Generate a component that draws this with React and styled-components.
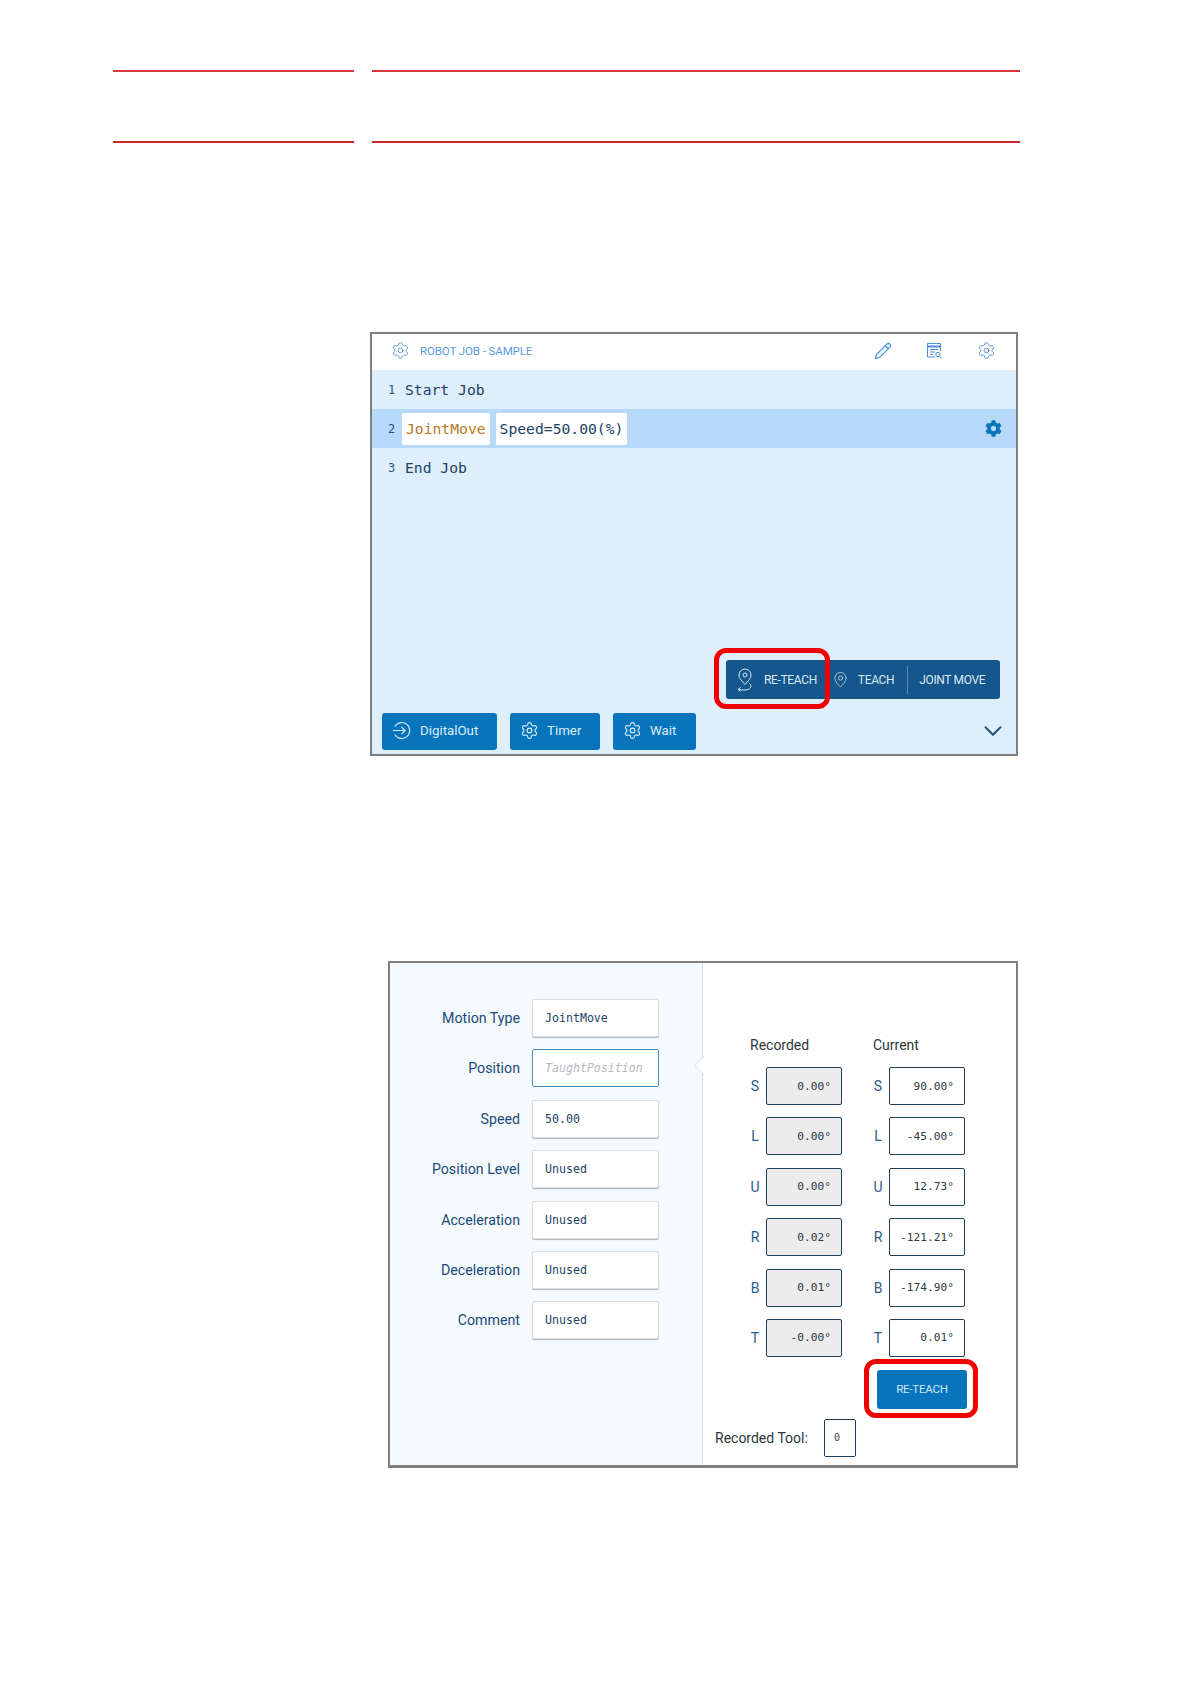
import React from 'react'
import styled, { createGlobalStyle } from 'styled-components'
import { Settings, Pencil, MapPin, ChevronDown } from 'lucide-react'
import { FaCog } from 'react-icons/fa'

const GlobalStyle = createGlobalStyle`
  html, body {
    margin: 0;
    padding: 0;
    background: #fff;
  }
  * {
    box-sizing: border-box;
  }
`

const mono = `"DejaVu Sans Mono", "Liberation Mono", monospace`
const sans = `Roboto, "Liberation Sans", sans-serif`

const Page = styled.div`
  width: 1191px;
  height: 1684px;
  padding: 70px 0 0 113px;
  overflow: hidden;
  font-family: ${sans};
`

const Rules = styled.div`
  display: grid;
  grid-template-columns: 241px 648px;
  column-gap: 18px;
  height: 73px;
`

const RuleCell = styled.div`
  border-top: 2px solid #d8353d;
  border-bottom: 2px solid #c9262e;
`

const JobPanel = styled.section`
  width: 648px;
  height: 424px;
  margin: 189px 0 0 257px;
  border: 2px solid #7f7f7f;
  display: flex;
  flex-direction: column;
  background: #deeefb;
`

const JobHeader = styled.header`
  height: 36px;
  flex: none;
  display: flex;
  align-items: center;
  padding: 0 20px 3px 19px;
  background: #fff;
  color: #4a8fd8;
`

const JobTitle = styled.span`
  margin-left: 10px;
  font-size: 11.5px;
  letter-spacing: -0.1px;
  flex: 1;
  color: #5b9ade;
`

const HeaderTools = styled.div`
  display: flex;
  align-items: center;
  gap: 34px;
`

const JobRow = styled.div`
  height: 39px;
  flex: none;
  display: flex;
  align-items: center;
  padding: 0 14px 0 16px;
  background: ${(p) => (p.$active ? '#b8dafa' : 'transparent')};
  font-family: ${mono};
  font-size: 14.7px;
  color: #1c4265;
`

const LineNo = styled.span`
  width: ${(p) => (p.$chips ? '14px' : '17px')};
  font-size: 12px;
  color: #23557f;
`

const Chip = styled.span`
  height: 32px;
  display: flex;
  align-items: center;
  padding: 0 4px;
  margin-right: 6px;
  border-radius: 2px;
  background: #fff;
  color: ${(p) => p.$accent || '#1c4265'};
`

const RowGear = styled(FaCog)`
  margin-left: auto;
  width: 17px;
  height: 17px;
  color: #0874bb;
`

const JobFooter = styled.div`
  margin-top: auto;
  padding: 0 4px 4px 10px;
  display: flex;
  flex-direction: column;
  gap: 14px;
`

const MotionRow = styled.div`
  display: flex;
  justify-content: flex-end;
  padding-right: 12px;
`

const MotionGroup = styled.div`
  position: relative;
  width: 274px;
  height: 39px;
  display: flex;
  align-items: center;
  border-radius: 3px;
  background: #15568c;
  color: #d5e6f4;
  font-size: 12px;
  letter-spacing: -0.35px;
`

const MotionItem = styled.div`
  display: flex;
  align-items: center;
  gap: ${(p) => p.$gap || 0}px;
  margin-left: ${(p) => p.$left || 0}px;
  height: 100%;
  color: #d9e9f6;

  svg {
    flex: none;
  }
`

const MotionDivider = styled.div`
  width: 1px;
  height: 28px;
  margin-left: 13px;
  background: #5c8cb4;
`

const RedFrame = styled.div`
  position: absolute;
  left: ${(p) => p.$left}px;
  top: ${(p) => p.$top}px;
  width: ${(p) => p.$width}px;
  height: ${(p) => p.$height}px;
  border: 5px solid #f00000;
  border-radius: 12px;
  pointer-events: none;
`

const FooterRow = styled.div`
  display: flex;
  align-items: center;
  gap: 13px;
`

const ActionButton = styled.button`
  width: ${(p) => p.$width}px;
  height: 37px;
  display: flex;
  align-items: center;
  gap: ${(p) => p.$gap}px;
  padding: 0 0 2px 10px;
  border: 0;
  border-radius: 3px;
  background: #0874bb;
  color: #d8eefc;
  font-family: ${sans};
  font-size: 13.3px;
`

const Chevron = styled(ChevronDown)`
  margin: -2px 4px 0 auto;
  color: #1c4f7c;
`

const FormPanel = styled.section`
  position: relative;
  width: 630px;
  height: 507px;
  margin: 205px 0 0 275px;
  border: 2px solid #7f7f7f;
  border-width: 2px 2px 3px 2px;
  display: grid;
  grid-template-columns: 313px 1fr;
  background: #fff;
`

const FormColumn = styled.div`
  position: relative;
  padding-top: 36px;
  display: flex;
  flex-direction: column;
  gap: 12.4px;
  background: #f5faff;
  border-right: 1px solid #d5dee6;
`

const Notch = styled.div`
  position: absolute;
  right: -1px;
  top: 95px;
  width: 15px;
  height: 15px;
  margin-right: -1px;
  background: #fff;
  border-left: 1px solid #d5dee6;
  border-bottom: 1px solid #d5dee6;
  transform: translateX(8px) rotate(45deg);
  clip-path: polygon(0 0, 100% 100%, 0 100%);
`

const FormRow = styled.div`
  display: flex;
  align-items: center;
  height: 38px;
`

const FormLabel = styled.label`
  width: 130px;
  margin-right: 12px;
  text-align: right;
  font-size: 14.2px;
  color: #1c4a77;
`

const FormField = styled.div`
  width: 127px;
  height: 38px;
  display: flex;
  align-items: center;
  padding-left: 12px;
  background: #fff;
  border: 1px solid ${(p) => (p.$focus ? '#4d8fc0' : '#dcdfe2')};
  border-radius: 2px;
  box-shadow: ${(p) => (p.$focus ? 'none' : '0 1px 1px rgba(0, 0, 0, 0.28)')};
  font-family: ${mono};
  font-size: 11.6px;
  font-style: ${(p) => (p.$focus ? 'italic' : 'normal')};
  color: ${(p) => (p.$focus ? '#b5b9bc' : '#1c4265')};
`

const AxisColumn = styled.div`
  padding: 72px 0 0 12px;
`

const AxisGrid = styled.div`
  margin-left: 35px;
  display: grid;
  grid-template-columns: 92px 92px;
  column-gap: 31px;
  row-gap: 12.4px;
  font-size: 14px;
  color: #222;
`

const AxisHeading = styled.div`
  height: 20px;
  line-height: 20px;
  margin-bottom: -0.4px;
  font-size: 14px;
  color: #2b3640;
`

const AxisCell = styled.div`
  display: flex;
  align-items: center;
  height: 38px;
`

const AxisLetter = styled.span`
  width: 10px;
  margin-right: 6px;
  text-align: center;
  font-size: 14px;
  color: #2b5d8c;
`

const AxisValue = styled.div`
  width: 76px;
  height: 38px;
  display: flex;
  align-items: center;
  justify-content: flex-end;
  padding-right: 10px;
  border: 1px solid #1d3f5e;
  border-radius: 2px;
  background: ${(p) => (p.$recorded ? '#ececec' : '#fff')};
  font-family: ${mono};
  font-size: 11.2px;
  color: #2d3a44;
`

const ButtonRow = styled.div`
  margin: 13px 0 10px 162px;
`

const TeachButton = styled.button`
  position: relative;
  width: 90px;
  height: 39px;
  display: block;
  border: 0;
  border-radius: 3px;
  background: #0874bb;
  color: #cfe8fa;
  font-family: ${sans};
  font-size: 11.5px;
  letter-spacing: -0.2px;
`

const ToolRow = styled.div`
  display: flex;
  align-items: center;
`

const ToolLabel = styled.span`
  width: 109px;
  font-size: 14px;
  color: #2b3640;
`

const ToolValue = styled.div`
  width: 32px;
  height: 38px;
  display: flex;
  align-items: center;
  padding-left: 9px;
  border: 1px solid #1d3f5e;
  border-radius: 2px;
  font-family: ${mono};
  font-size: 10px;
  color: #3a4650;
`

const ReportIcon = () => (
  <svg width="17" height="17" viewBox="0 0 17 17" fill="none" stroke="currentColor" strokeWidth="1">
    <path d="M9 15H1.5V1.5H14.5V9" />
    <path d="M1.5 4.5H14.5" strokeWidth="2" />
    <path d="M4 7.5H12M4 10H9M4 12.5H7" />
    <circle cx="12" cy="12.5" r="2.2" />
    <path d="M13.7 14.2L15.8 16.2" />
  </svg>
)

const RecallPin = () => (
  <svg width="20" height="24" viewBox="0 0 20 24" fill="none" stroke="currentColor" strokeWidth="1">
    <path d="M10 16.5C7 13 4 10.5 4 7A6 6 0 0 1 16 7C16 10.5 13 13 10 16.5Z" />
    <circle cx="10" cy="7" r="2" />
    <path d="M14.5 15.5C16.5 17 16.5 20 13.5 21.3C11 22.2 7 22.2 3.5 21.5" />
    <path d="M5.5 19.5L3 21.4L5.5 23.2" />
  </svg>
)

const OutputIcon = () => (
  <svg width="19" height="19" viewBox="0 0 19 19" fill="none" stroke="currentColor" strokeWidth="1.1">
    <path d="M2.8 5.5A8 8 0 1 1 2.8 13.5" />
    <path d="M1 9.5H13M9.5 6L13 9.5L9.5 13" />
  </svg>
)

const fields = [
  { label: 'Motion Type', value: 'JointMove' },
  { label: 'Position', value: 'TaughtPosition', focus: true },
  { label: 'Speed', value: '50.00' },
  { label: 'Position Level', value: 'Unused' },
  { label: 'Acceleration', value: 'Unused' },
  { label: 'Deceleration', value: 'Unused' },
  { label: 'Comment', value: 'Unused' },
]

const axes = [
  ['S', '0.00°', '90.00°'],
  ['L', '0.00°', '-45.00°'],
  ['U', '0.00°', '12.73°'],
  ['R', '0.02°', '-121.21°'],
  ['B', '0.01°', '-174.90°'],
  ['T', '-0.00°', '0.01°'],
]

export default function App() {
  return (
    <Page>
      <GlobalStyle />
      <Rules>
        <RuleCell />
        <RuleCell />
      </Rules>

      <JobPanel>
        <JobHeader>
          <Settings size={19} strokeWidth={1.1} />
          <JobTitle>ROBOT JOB - SAMPLE</JobTitle>
          <HeaderTools>
            <Pencil size={18} strokeWidth={1.7} />
            <ReportIcon />
            <Settings size={19} strokeWidth={1.2} />
          </HeaderTools>
        </JobHeader>
        <JobRow>
          <LineNo>1</LineNo>Start Job
        </JobRow>
        <JobRow $active>
          <LineNo $chips>2</LineNo>
          <Chip $accent="#b8791c">JointMove</Chip>
          <Chip>Speed=50.00(%)</Chip>
          <RowGear />
        </JobRow>
        <JobRow>
          <LineNo>3</LineNo>End Job
        </JobRow>
        <JobFooter>
          <MotionRow>
            <MotionGroup>
              <MotionItem $left={9} $gap={9}>
                <RecallPin />
                RE-TEACH
              </MotionItem>
              <MotionItem $left={15} $gap={9}>
                <MapPin size={17} strokeWidth={1} />
                TEACH
              </MotionItem>
              <MotionDivider />
              <MotionItem $left={11}>JOINT MOVE</MotionItem>
              <RedFrame $left={-12} $top={-12} $width={116} $height={61} />
            </MotionGroup>
          </MotionRow>
          <FooterRow>
            <ActionButton $width={115} $gap={9}>
              <OutputIcon />
              DigitalOut
            </ActionButton>
            <ActionButton $width={90} $gap={8}>
              <Settings size={19} strokeWidth={1.4} />
              Timer
            </ActionButton>
            <ActionButton $width={83} $gap={8}>
              <Settings size={19} strokeWidth={1.4} />
              Wait
            </ActionButton>
            <Chevron size={30} strokeWidth={1.5} />
          </FooterRow>
        </JobFooter>
      </JobPanel>

      <FormPanel>
        <FormColumn>
          <Notch />
          {fields.map((f) => (
            <FormRow key={f.label}>
              <FormLabel>{f.label}</FormLabel>
              <FormField $focus={f.focus}>{f.value}</FormField>
            </FormRow>
          ))}
        </FormColumn>
        <AxisColumn>
          <AxisGrid>
            <AxisHeading>Recorded</AxisHeading>
            <AxisHeading>Current</AxisHeading>
            {axes.map(([axis, recorded, current]) => (
              <React.Fragment key={axis}>
                <AxisCell>
                  <AxisLetter>{axis}</AxisLetter>
                  <AxisValue $recorded>{recorded}</AxisValue>
                </AxisCell>
                <AxisCell>
                  <AxisLetter>{axis}</AxisLetter>
                  <AxisValue>{current}</AxisValue>
                </AxisCell>
              </React.Fragment>
            ))}
          </AxisGrid>
          <ButtonRow>
            <TeachButton>
              RE-TEACH
              <RedFrame $left={-13} $top={-11} $width={114} $height={59} />
            </TeachButton>
          </ButtonRow>
          <ToolRow>
            <ToolLabel>Recorded Tool:</ToolLabel>
            <ToolValue>0</ToolValue>
          </ToolRow>
        </AxisColumn>
      </FormPanel>
    </Page>
  )
}
